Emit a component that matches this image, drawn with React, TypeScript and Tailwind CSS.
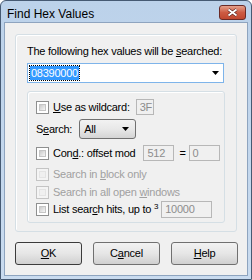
import React from "react";

const FONT = { fontFamily: '"Liberation Sans", Arial, sans-serif' };

function Check({ disabled }: { disabled?: boolean }) {
  return (
    <span
      className={
        "inline-block w-[13px] h-[13px] shrink-0 border p-[2px] " +
        (disabled ? "border-[#c4c4c4] bg-[#f4f4f4]" : "border-[#8e8f8f] bg-white")
      }
    >
      <span
        className={
          "block w-full h-full border " +
          (disabled
            ? "border-[#e4e4e4] bg-[#f0f0f0]"
            : "border-[#c5c5c5] bg-gradient-to-br from-[#cbcbcb] to-[#f6f6f6]")
        }
      />
    </span>
  );
}

function Field({ value, className }: { value: string; className: string }) {
  return (
    <span
      className={
        "flex shrink-0 items-center h-[16px] border border-[#b7b7b7] bg-[#f0f0f0] pl-[3px] text-[#8d8d8d] " +
        className
      }
    >
      {value}
    </span>
  );
}

function Btn({ children, def }: { children: React.ReactNode; def?: boolean }) {
  return (
    <div
      className={
        "w-[67px] h-[23px] rounded-[3px] border flex items-center justify-center bg-gradient-to-b from-[#f2f2f2] via-[#e6e6e6] to-[#d0d0d0] " +
        (def ? "border-[#3c3c3c]" : "border-[#707070]")
      }
    >
      <span className="text-black">{children}</span>
    </div>
  );
}

export default function App() {
  return (
    <div
      className="w-[252px] h-[280px] flex flex-col bg-gradient-to-b from-[#bcd2ea] to-[#c9dbef] border border-[#465a73] rounded-t-[6px] text-[11px] tracking-[-0.25px] text-black overflow-hidden whitespace-nowrap"
      style={FONT}
    >
      {/* Title bar */}
      <div className="h-[21px] flex items-start justify-between pl-[6px] pr-[5px] tracking-normal">
        <span className="text-[12px] mt-[4px] text-black">Find Hex Values</span>
        <div className="mt-[4px] w-[27px] h-[15px] rounded-[3px] border border-[#6a2a26] bg-gradient-to-b from-[#e4a08c] via-[#cd5b43] to-[#c0472f] flex items-center justify-center">
          <svg width="11" height="9" viewBox="0 0 11 9">
            <path d="M1.5 1.5 L9.5 7.5 M9.5 1.5 L1.5 7.5" stroke="#5a2420" strokeWidth="3.2" />
            <path d="M1.5 1.5 L9.5 7.5 M9.5 1.5 L1.5 7.5" stroke="#ffffff" strokeWidth="1.8" />
          </svg>
        </div>
      </div>

      {/* Client */}
      <div className="flex-1 mx-[3px] mb-[3px] bg-[#f0f0f0] border border-[#8ea4bf] flex flex-col">
        {/* outer group */}
        <div className="mt-[11px] ml-[10px] w-[222px] h-[198px] border border-[#d5dfe5] rounded-[3px] shadow-[inset_1px_1px_0_#ffffff] pl-[11px] pt-[10px]">
          <div className="h-[13px] leading-[13px]">
            The following hex values will be <span className="underline">s</span>earched:
          </div>
          <div className="mt-[5px] w-[197px] h-[20px] border border-[#7eb4ea] bg-white flex items-center pl-[2px] pr-[4px]">
            <span className="bg-[#3399ff] text-white h-[14px] leading-[14px] px-[1px] outline-1 outline-dotted outline-[#000]">
              08390000
            </span>
            <span className="flex-1" />
            <svg width="7" height="4" viewBox="0 0 7 4">
              <path d="M0 0 H7 L3.5 4 Z" fill="#000" />
            </svg>
          </div>

          {/* inner group */}
          <div className="mt-[8px] w-[198px] h-[132px] border border-[#d5dfe5] rounded-[3px] shadow-[inset_1px_1px_0_#ffffff] pl-[8px] pt-[7px] flex flex-col">
            <div className="h-[16px] flex items-center">
              <Check />
              <span className="ml-[4px]">
                <span className="underline">U</span>se as wildcard:
              </span>
              <Field value="3F" className="ml-[6px] w-[18px]" />
            </div>
            <div className="mt-[4px] h-[20px] flex items-center">
              <span>
                S<span className="underline">e</span>arch:
              </span>
              <div className="ml-[7px] w-[57px] h-[20px] rounded-[3px] border border-[#707070] bg-gradient-to-b from-[#f2f2f2] via-[#e8e8e8] to-[#d4d4d4] flex items-center pl-[4px] pr-[6px]">
                <span className="flex-1">All</span>
                <svg width="7" height="4" viewBox="0 0 7 4">
                  <path d="M0 0 H7 L3.5 4 Z" fill="#000" />
                </svg>
              </div>
            </div>
            <div className="mt-[6px] h-[16px] flex items-center">
              <Check />
              <span className="ml-[4px]">
                Con<span className="underline">d</span>.: offset mod
              </span>
              <Field value="512" className="ml-[8px] w-[31px]" />
              <span className="ml-[5px]">=</span>
              <Field value="0" className="ml-[3px] w-[31px]" />
            </div>
            <div className="mt-[5px] h-[16px] flex items-center text-[#a0a0a0]">
              <Check disabled />
              <span className="ml-[4px]">
                Search in <span className="underline">b</span>lock only
              </span>
            </div>
            <div className="mt-[2px] h-[16px] flex items-center text-[#a0a0a0]">
              <Check disabled />
              <span className="ml-[4px]">
                Search in all open <span className="underline">w</span>indows
              </span>
            </div>
            <div className="mt-[1px] h-[17px] flex items-center">
              <Check />
              <span className="ml-[4px]">
                List sear<span className="underline">c</span>h hits, up to <sup className="text-[8px]">3</sup>
              </span>
              <Field value="10000" className="ml-[3px] w-[51px] h-[17px]" />
            </div>
          </div>
        </div>

        {/* buttons */}
        <div className="mt-[10px] ml-[10px] flex gap-[11px]">
          <Btn def>
            <span className="underline">O</span>K
          </Btn>
          <Btn>
            C<span className="underline">a</span>ncel
          </Btn>
          <Btn>
            <span className="underline">H</span>elp
          </Btn>
        </div>
      </div>
    </div>
  );
}
